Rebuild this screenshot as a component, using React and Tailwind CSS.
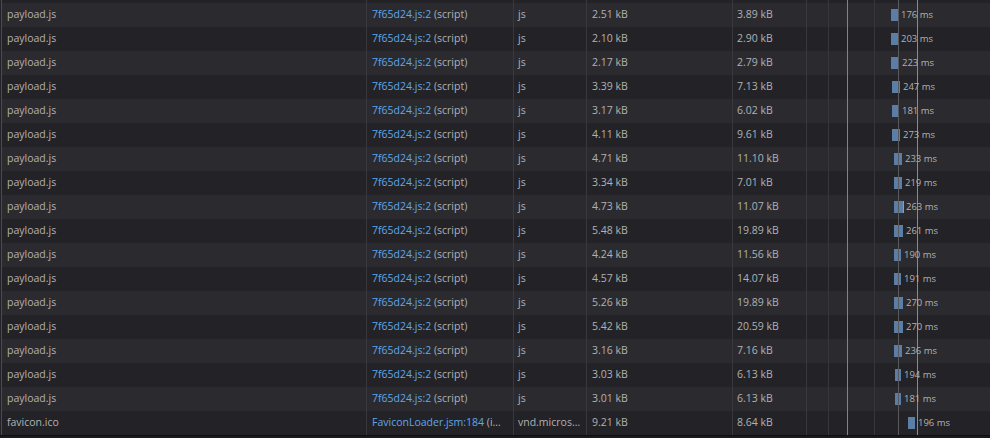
import React from "react";

const rows = [
  ["payload.js", "7f65d24.js:2", "(script)", "js", "2.51 kB", "3.89 kB", "176 ms", 891, 7, false],
  ["payload.js", "7f65d24.js:2", "(script)", "js", "2.10 kB", "2.90 kB", "203 ms", 891, 7, false],
  ["payload.js", "7f65d24.js:2", "(script)", "js", "2.17 kB", "2.79 kB", "223 ms", 891, 8, false],
  ["payload.js", "7f65d24.js:2", "(script)", "js", "3.39 kB", "7.13 kB", "247 ms", 892, 8, false],
  ["payload.js", "7f65d24.js:2", "(script)", "js", "3.17 kB", "6.02 kB", "181 ms", 892, 7, false],
  ["payload.js", "7f65d24.js:2", "(script)", "js", "4.11 kB", "9.61 kB", "273 ms", 892, 8, false],
  ["payload.js", "7f65d24.js:2", "(script)", "js", "4.71 kB", "11.10 kB", "233 ms", 894, 8, false],
  ["payload.js", "7f65d24.js:2", "(script)", "js", "3.34 kB", "7.01 kB", "219 ms", 894, 8, false],
  ["payload.js", "7f65d24.js:2", "(script)", "js", "4.73 kB", "11.07 kB", "263 ms", 894, 9, true],
  ["payload.js", "7f65d24.js:2", "(script)", "js", "5.48 kB", "19.89 kB", "261 ms", 894, 9, false],
  ["payload.js", "7f65d24.js:2", "(script)", "js", "4.24 kB", "11.56 kB", "190 ms", 894, 7, false],
  ["payload.js", "7f65d24.js:2", "(script)", "js", "4.57 kB", "14.07 kB", "191 ms", 894, 7, false],
  ["payload.js", "7f65d24.js:2", "(script)", "js", "5.26 kB", "19.89 kB", "270 ms", 894, 9, false],
  ["payload.js", "7f65d24.js:2", "(script)", "js", "5.42 kB", "20.59 kB", "270 ms", 894, 9, false],
  ["payload.js", "7f65d24.js:2", "(script)", "js", "3.16 kB", "7.16 kB", "236 ms", 894, 8, false],
  ["payload.js", "7f65d24.js:2", "(script)", "js", "3.03 kB", "6.13 kB", "194 ms", 895, 6, false],
  ["payload.js", "7f65d24.js:2", "(script)", "js", "3.01 kB", "6.13 kB", "181 ms", 895, 6, false],
  ["favicon.ico", "FaviconLoader.jsm:184", "(i…", "vnd.micros…", "9.21 kB", "8.64 kB", "196 ms", 908, 7, false],
];

const WF = 807;

function Cells({ children }) {
  return children;
}

function Row({ r, light }) {
  const [file, init, initType, type, transferred, size, ms, bx, bw, green] = r;
  return (
    <div className={`flex h-[24px] items-center ${light ? "bg-[#2b2b2f]" : "bg-[#232327]"}`}>
      <div className="w-[365px] h-full flex items-center pl-[5px] border-r border-[#38383d] truncate">{file}</div>
      <div className="w-[147px] h-full flex items-center pl-[5px] border-r border-[#38383d] whitespace-nowrap overflow-hidden">
        <span className="text-[#5fa6ea]">{init}</span>
        <span>&nbsp;{initType}</span>
      </div>
      <div className="w-[73px] h-full flex items-center pl-[4px] border-r border-[#38383d] whitespace-nowrap overflow-hidden">{type}</div>
      <div className="w-[146px] h-full flex items-center pl-[5px] border-r border-[#38383d]">{transferred}</div>
      <div className="w-[74px] h-full flex items-center pl-[4px] border-r border-[#38383d]">{size}</div>
      <div className="relative flex-1 h-full">
        <div
          className="absolute top-[6px] h-[12px] bg-[#5a7ea5]"
          style={{ left: bx - WF, width: bw }}
        />
        {green && (
          <div className="absolute top-[6px] h-[12px] w-[1px] bg-[#70bf53]" style={{ left: bx - WF + bw }} />
        )}
        <div
          className="absolute top-0 h-full flex items-center text-[9.5px] whitespace-nowrap z-10"
          style={{ left: bx - WF + bw + 3 }}
        >
          {ms}
        </div>
      </div>
    </div>
  );
}

export default function App() {
  return (
    <div
      className="w-[990px] h-[438px] overflow-hidden bg-[#232327] text-[#b1b1b3] text-[10.5px]"
      style={{ fontFamily: '"Open Sans", "Noto Sans", sans-serif' }}
    >
      <div className="relative ml-[1px] border-l border-[#4a4a4f] h-[435px]">
        <div className="flex h-[3px] bg-[#232327]">
          <div className="w-[365px] border-r border-[#38383d]" />
          <div className="w-[147px] border-r border-[#38383d]" />
          <div className="w-[73px] border-r border-[#38383d]" />
          <div className="w-[146px] border-r border-[#38383d]" />
          <div className="w-[74px] border-r border-[#38383d]" />
          <div className="flex-1" />
        </div>
        {rows.map((r, i) => (
          <Row key={i} r={r} light={i % 2 === 0} />
        ))}
        <div className="pointer-events-none absolute inset-y-0 left-[826px] w-[1px] bg-[#36363b]" />
        <div className="pointer-events-none absolute inset-y-0 left-[845px] w-[1px] bg-[#4c8fd6]" />
        <div className="pointer-events-none absolute inset-y-0 left-[872px] w-[1px] bg-[#36363b]" />
        <div className="pointer-events-none absolute inset-y-0 left-[896px] w-[1px] bg-[#58585d]" />
        <div className="pointer-events-none absolute inset-y-0 left-[915px] w-[1px] bg-[#c65fc6]" />
      </div>
      <div className="h-[1px] bg-[#0f0f11]" />
      <div className="h-[2px] bg-[#1a1a1d]" />
    </div>
  );
}
